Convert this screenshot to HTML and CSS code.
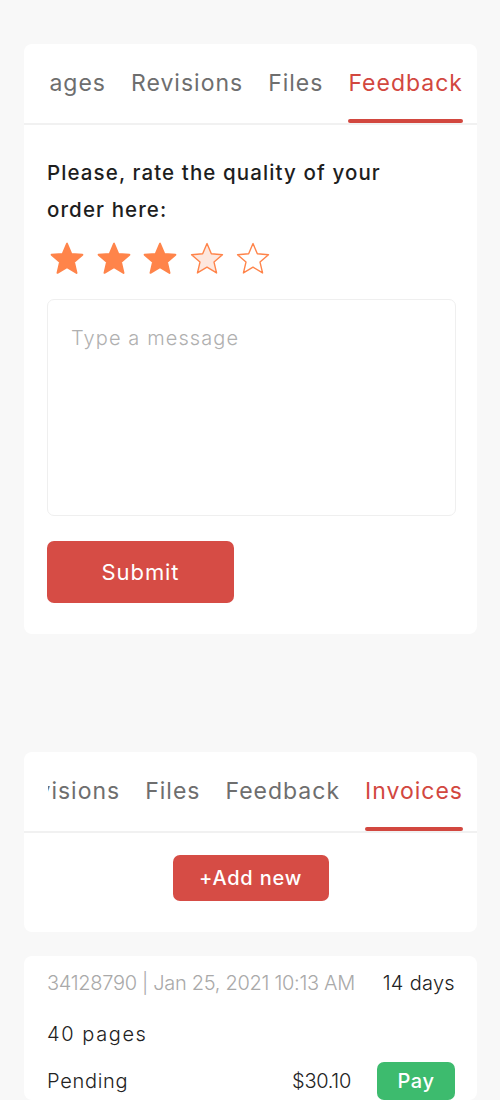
FILE: index.html
```html
<!DOCTYPE html>
<html lang="en">
<head>
<meta charset="utf-8">
<title>Order</title>
<link rel="stylesheet" href="styles.css">
</head>
<body>
<div class="page">
  <section class="card card-feedback">
    <div class="tabs">
      <div class="tab-track">
        <div class="tab">Messages</div>
        <div class="tab">Revisions</div>
        <div class="tab">Files</div>
        <div class="tab active">Feedback</div>
      </div>
    </div>
    <div class="card-body">
      <p class="rate-title">Please, rate the quality of your order here:</p>
      <div class="stars">
        <svg class="star full" viewBox="1 1 22 21"><path d="M12 17.27L18.18 21l-1.64-7.03L22 9.24l-7.19-.61L12 2 9.19 8.63 2 9.240l5.46 4.73L5.82 21z"/></svg>
        <svg class="star full" viewBox="1 1 22 21"><path d="M12 17.27L18.18 21l-1.64-7.03L22 9.24l-7.19-.61L12 2 9.19 8.63 2 9.24l5.46 4.73L5.82 21z"/></svg>
        <svg class="star full" viewBox="1 1 22 21"><path d="M12 17.27L18.18 21l-1.64-7.03L22 9.24l-7.19-.61L12 2 9.19 8.63 2 9.24l5.46 4.73L5.82 21z"/></svg>
        <svg class="star hover" viewBox="1 1 22 21"><path d="M12 17.27L18.18 21l-1.64-7.03L22 9.24l-7.19-.61L12 2 9.19 8.63 2 9.24l5.46 4.73L5.82 21z"/></svg>
        <svg class="star empty" viewBox="1 1 22 21"><path d="M12 17.27L18.18 21l-1.64-7.03L22 9.24l-7.19-.61L12 2 9.19 8.63 2 9.24l5.46 4.73L5.82 21z"/></svg>
      </div>
      <textarea class="message" placeholder="Type a message"></textarea>
      <button class="btn btn-submit" type="button">Submit</button>
    </div>
  </section>

  <section class="card card-invoices">
    <div class="tabs">
      <div class="tab-track">
        <div class="tab">Revisions</div>
        <div class="tab">Files</div>
        <div class="tab">Feedback</div>
        <div class="tab active">Invoices</div>
      </div>
    </div>
    <div class="add-wrap">
      <button class="btn btn-add" type="button">+Add new</button>
    </div>
  </section>

  <section class="card card-invoice">
    <div class="inv-row">
      <span class="inv-meta">34128790 | Jan 25, 2021 10:13 AM</span>
      <span class="inv-days">14 days</span>
    </div>
    <div class="inv-row row-pages">
      <span class="inv-pages">40 pages</span>
    </div>
    <div class="inv-row row-status">
      <span class="inv-status">Pending</span>
      <div class="inv-pay">
        <span class="inv-price">$30.10</span>
        <button class="btn btn-pay" type="button">Pay</button>
      </div>
    </div>
  </section>
</div>
</body>
</html>
```

FILE: styles.css
```css
* { box-sizing: border-box; }

html, body {
  margin: 0;
  padding: 0;
  background: #f8f8f8;
}

body {
  font-family: Inter, "Noto Sans", sans-serif;
  color: #222;
}

.page {
  display: flex;
  flex-direction: column;
  padding: 44px 23px 0 24px;
}

.card {
  background: #fff;
  border-radius: 8px;
  width: 453px;
}

.card-invoices { margin-top: 118px; }
.card-invoice { margin-top: 24px; }

/* tabs */
.tabs {
  margin-left: 24px;
  margin-right: 12px;
  overflow: hidden;
}

.tab-track {
  display: flex;
  justify-content: flex-end;
  gap: 21px;
  height: 79px;
}

.tabs + * { border-top: 2px solid #f1f1f1; }

.tab {
  flex: 0 0 auto;
  display: flex;
  flex-direction: column;
  padding: 21px 2px 0;
  font-size: 23px;
  line-height: 36px;
  font-weight: 400;
  letter-spacing: 1px;
  color: #6e6e6e;
  white-space: nowrap;
}

.tab::after {
  content: "";
  margin-top: auto;
  height: 4px;
  border-radius: 2px;
  background: transparent;
}

.tab.active { color: #d2473f; }
.tab.active::after { background: #d2473f; }

/* feedback card */
.card-body {
  padding: 29px 21px 31px 23px;
}

.rate-title {
  margin: 0;
  font-size: 20.5px;
  line-height: 37px;
  font-weight: 500;
  letter-spacing: 1.1px;
  color: #1e1e1e;
  width: 360px;
}

.stars {
  display: flex;
  gap: 12.5px;
  margin: 14px 0 0 3px;
}

.star {
  width: 34px;
  height: 32.5px;
  display: block;
}

.star path {
  stroke: #ff844a;
  stroke-linejoin: round;
}

.star.full path { fill: #ff844a; stroke-width: 1.2; }
.star.hover path { fill: #fde7de; stroke-width: 0.9; }
.star.empty path { fill: #fff; stroke-width: 0.9; }

.message {
  display: block;
  width: 100%;
  height: 217px;
  margin-top: 24px;
  padding: 23px 23px;
  border: 1.5px solid #efefef;
  border-radius: 7px;
  resize: none;
  font-family: Inter, "Noto Sans", sans-serif;
  font-size: 20px;
  line-height: 30px;
  font-weight: 300;
  letter-spacing: 1.1px;
  color: #333;
  outline: none;
}

.message::placeholder { color: #b0b0b0; }

.btn {
  border: 0;
  border-radius: 7px;
  color: #fff;
  font-family: Inter, "Noto Sans", sans-serif;
  cursor: pointer;
  padding: 0;
}

.btn-submit {
  display: block;
  margin-top: 25px;
  width: 187px;
  height: 62px;
  background: #d64c45;
  font-size: 22px;
  font-weight: 400;
  letter-spacing: 0.9px;
}

/* invoices card */
.add-wrap {
  display: flex;
  justify-content: center;
  padding: 22px 0 31px;
}

.btn-add {
  width: 156px;
  height: 46px;
  background: #d64c45;
  font-size: 20px;
  font-weight: 500;
  letter-spacing: 0.8px;
}

/* invoice item */
.card-invoice {
  padding: 12px 22px 0 23px;
  display: flex;
  flex-direction: column;
}

.inv-row {
  display: flex;
  justify-content: space-between;
  align-items: center;
  font-size: 20px;
  line-height: 30px;
  font-weight: 300;
  color: #222;
}

.row-pages { margin-top: 21px; }
.row-status { margin-top: 13px; }

.inv-meta { color: #a9a9a9; letter-spacing: -0.3px; }
.inv-days { letter-spacing: 0.3px; }
.inv-pages { letter-spacing: 1.6px; }
.inv-status { letter-spacing: 0.7px; }
.inv-price { letter-spacing: -0.3px; }

.inv-pay {
  display: flex;
  align-items: center;
  gap: 26px;
}

.btn-pay {
  width: 78px;
  height: 38px;
  background: #3dbb6e;
  font-size: 20px;
  font-weight: 500;
  letter-spacing: 0.6px;
}
```
